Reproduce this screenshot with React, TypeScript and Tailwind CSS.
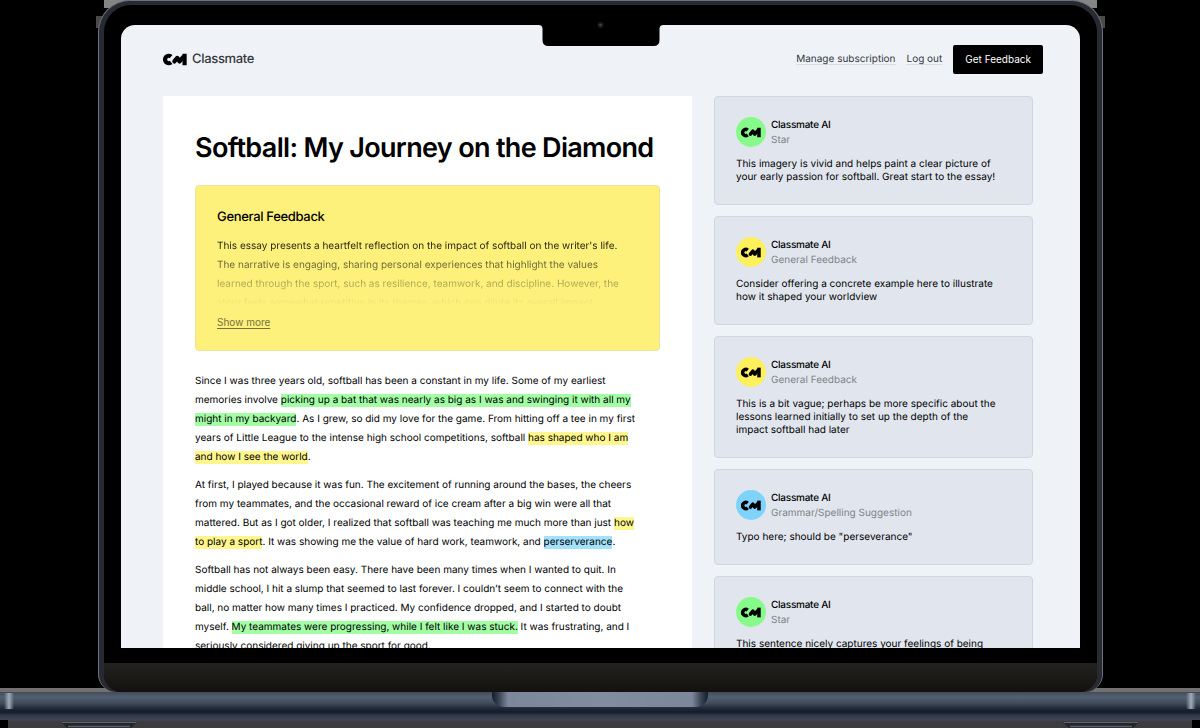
import type { ReactNode } from "react";

type Kind = "star" | "general" | "grammar";

const markColor: Record<Kind, string> = {
  star: "bg-[#a2fda5]",
  general: "bg-[#fff78e]",
  grammar: "bg-[#a3e1fc]",
};

const avatarColor: Record<Kind, string> = {
  star: "bg-[#86fb8a]",
  general: "bg-[#fdf05c]",
  grammar: "bg-[#7fd3fb]",
};

const comments: { kind: Kind; label: string; text: string }[] = [
  {
    kind: "star",
    label: "Star",
    text: "This imagery is vivid and helps paint a clear picture of your early passion for softball. Great start to the essay!",
  },
  {
    kind: "general",
    label: "General Feedback",
    text: "Consider offering a concrete example here to illustrate how it shaped your worldview",
  },
  {
    kind: "general",
    label: "General Feedback",
    text: "This is a bit vague; perhaps be more specific about the lessons learned initially to set up the depth of the impact softball had later",
  },
  {
    kind: "grammar",
    label: "Grammar/Spelling Suggestion",
    text: 'Typo here; should be "perseverance"',
  },
  {
    kind: "star",
    label: "Star",
    text: "This sentence nicely captures your feelings of being",
  },
];

function Logo({ className }: { className: string }) {
  return (
    <svg viewBox="0 0 74 40" className={className} aria-hidden="true">
      <path
        d="M25 11 A11.5 11.5 0 1 0 25 29"
        fill="none"
        stroke="#000"
        strokeWidth="13"
      />
      <path
        d="M35 26 L44 15 L51 26 L62 13"
        fill="none"
        stroke="#000"
        strokeWidth="13"
        strokeLinecap="round"
        strokeLinejoin="round"
      />
      <path d="M60 2 H73 V38 H60 Z" fill="#000" />
    </svg>
  );
}

function Mark({ kind, children }: { kind: Kind; children: ReactNode }) {
  return <mark className={`pb-px text-black ${markColor[kind]}`}>{children}</mark>;
}

function Header() {
  return (
    <header className="flex h-[29px] items-center justify-between">
      <a href="#" className="flex items-center gap-[5px]">
        <Logo className="h-[13px] w-[24px]" />
        <span className="text-[13px] font-medium tracking-tight text-[#35383c]">Classmate</span>
      </a>
      <nav className="flex items-center gap-[11px] text-[10px] text-[#35383c]">
        <a href="#" className="underline decoration-[#d9dde2] underline-offset-2">
          Manage subscription
        </a>
        <a href="#" className="underline decoration-[#d9dde2] underline-offset-2">
          Log out
        </a>
        <button type="button" className="h-[29px] rounded-[2px] bg-black px-3 text-white">
          Get Feedback
        </button>
      </nav>
    </header>
  );
}

function Essay() {
  return (
    <article className="bg-white px-8 pt-[33px] pb-10">
      <h1 className="text-[27px] leading-[38px] font-semibold tracking-tight whitespace-nowrap">
        Softball: My Journey on the Diamond
      </h1>
      <section className="mt-[18px] rounded-[4px] border border-[#ece39a] bg-[#fdf17c] px-[21px] pt-[21px] pb-[18px]">
        <h2 className="text-[13px] leading-5 font-medium tracking-tight">General Feedback</h2>
        <div className="mt-[10px] h-[68px] overflow-hidden pr-3 [mask-image:linear-gradient(to_bottom,black,transparent)]">
          <p className="text-[10px] leading-[19px]">
            This essay presents a heartfelt reflection on the impact of softball on the writer's life. The
            narrative is engaging, sharing personal experiences that highlight the values learned through the
            sport, such as resilience, teamwork, and discipline. However, the story feels somewhat repetitive in
            its themes, which can dilute its overall impact.
          </p>
        </div>
        <button
          type="button"
          className="mt-2 block text-[10px] leading-[19px] text-[#77713f] underline underline-offset-2"
        >
          Show more
        </button>
      </section>
      <div className="mt-[21px] space-y-[9px] pr-4 text-[10px] leading-[19px] text-black">
        <p>
          Since I was three years old, softball has been a constant in my life. Some of my earliest memories
          involve{" "}
          <Mark kind="star">
            picking up a bat that was nearly as big as I was and swinging it with all my might in my backyard
          </Mark>
          . As I grew, so did my love for the game. From hitting off a tee in my first years of Little League to
          the intense high school competitions, softball{" "}
          <Mark kind="general">has shaped who I am and how I see the world</Mark>.
        </p>
        <p>
          At first, I played because it was fun. The excitement of running around the bases, the cheers from my
          teammates, and the occasional reward of ice cream after a big win were all that mattered. But as I got
          older, I realized that softball was teaching me much more than just{" "}
          <Mark kind="general">how to play a sport</Mark>. It was showing me the value of hard work, teamwork,
          and <Mark kind="grammar">perserverance</Mark>.
        </p>
        <p>
          Softball has not always been easy. There have been many times when I wanted to quit. In middle school,
          I hit a slump that seemed to last forever. I couldn’t seem to connect with the ball, no matter how
          many times I practiced. My confidence dropped, and I started to doubt myself.{" "}
          <Mark kind="star">My teammates were progressing, while I felt like I was stuck.</Mark> It was
          frustrating, and I seriously considered giving up the sport for good.
        </p>
      </div>
    </article>
  );
}

function Comments() {
  return (
    <aside className="space-y-[11px]">
      {comments.map((comment, index) => (
        <section
          key={index}
          className="rounded-[4px] border border-[#d0d6e0] bg-[#e1e6ee] px-[21px] py-5 text-[10px]"
        >
          <div className="flex items-start gap-[5px]">
            <div
              className={`flex size-[30px] items-center justify-center rounded-full ${avatarColor[comment.kind]}`}
            >
              <Logo className="h-[11px] w-5" />
            </div>
            <div className="pt-px leading-[15px]">
              <h3 className="font-medium tracking-tight">Classmate AI</h3>
              <p className="text-[#7e8389]">{comment.label}</p>
            </div>
          </div>
          <p className="mt-[10px] pr-[13px] leading-[13px] text-black">{comment.text}</p>
        </section>
      ))}
    </aside>
  );
}

function Foot() {
  return (
    <svg viewBox="0 0 76 7" className="h-[7px] w-[76px]" aria-hidden="true">
      <path d="M0 1 H76 L70 7 H6 Z" fill="#24262b" />
      <path d="M1 1.5 H75" stroke="#5f636b" strokeWidth="1" />
      <path d="M7 5.5 H69" stroke="#5b5f67" strokeWidth="1.5" />
    </svg>
  );
}

function Base() {
  return (
    <div className="relative h-9 shrink-0 bg-[linear-gradient(to_bottom,#414b5a_0,#526071_5px,#414c5c_11px,#1d2636_17px,#161d2b_20px,#343b4a_24px,#414555_28px,#3c3c3e_30px,#3c3c3e_36px)]">
      <div className="absolute top-px left-1 h-4 w-[10px] bg-[linear-gradient(to_right,transparent,#a3acb9,transparent)]" />
      <div className="absolute top-px right-1 h-4 w-[10px] bg-[linear-gradient(to_right,transparent,#a3acb9,transparent)]" />
      <div className="absolute bottom-0 left-0 h-2 w-2 bg-black" />
      <div className="absolute right-0 bottom-0 h-2 w-2 bg-black" />
      <div className="mx-auto h-[15px] w-[216px] rounded-b-[12px] bg-[linear-gradient(to_right,#141c29_0,#3a4453_7px,#7c879a_16px,#818c9f_50%,#7c879a_200px,#3a4453_209px,#141c29_216px)]" />
      <div className="flex justify-between px-[61px] pt-[14px]">
        <Foot />
        <Foot />
      </div>
    </div>
  );
}

export default function App() {
  return (
    <div className="flex h-screen flex-col overflow-hidden bg-black bg-[linear-gradient(#73716f,#73716f)] bg-[length:100%_4px] bg-[position:0_calc(100%-36px)] bg-no-repeat font-['Inter',sans-serif] text-black [text-rendering:geometricPrecision]">
      <div className="relative mr-[97px] ml-[98px] flex min-h-0 flex-1 flex-col">
        <div className="absolute top-0 left-[6px] h-2 w-6 bg-[#858585]" />
        <div className="absolute top-0 right-[6px] h-2 w-6 bg-[#858585]" />
        <div className="absolute top-4 -left-[2px] h-3 w-4 bg-[#4a4a4a]" />
        <div className="absolute top-4 -right-[2px] h-3 w-4 bg-[#4a4a4a]" />
        <div className="relative flex min-h-0 flex-1 flex-col rounded-t-[32px] rounded-b-[18px] border border-b-0 border-[#6c7080] bg-[#272a30] px-[5px] pt-1">
          <div className="relative flex min-h-0 flex-1 flex-col overflow-hidden rounded-t-[27px] rounded-b-[18px] bg-black">
            <div className="mx-[17px] mt-5 flex min-h-0 flex-1 flex-col overflow-hidden rounded-t-[14px] bg-[#eff3f8] pt-5 pr-[37px] pl-[42px]">
              <Header />
              <main className="mt-[22px] grid grid-cols-[minmax(0,529fr)_minmax(0,319fr)] items-start gap-[22px] pr-[10px]">
                <Essay />
                <Comments />
              </main>
            </div>
            <div className="h-[15px] shrink-0" />
            <div className="h-[29px] shrink-0 bg-linear-to-b from-[#23221f] to-[#141210]" />
            <svg
              viewBox="0 0 125 46"
              className="absolute top-0 left-1/2 h-[41px] w-[125px] -translate-x-1/2"
              preserveAspectRatio="xMidYMax slice"
              aria-hidden="true"
            >
              <path
                d="M0 0 H125 V25 Q121 25 121 29 V40 Q121 46 115 46 H10 Q4 46 4 40 V29 Q4 25 0 25 Z"
                fill="#000"
              />
              <circle cx="62" cy="25" r="3" fill="#17191b" />
              <circle cx="62" cy="25" r="1.3" fill="#3c4145" />
            </svg>
          </div>
        </div>
      </div>
      <Base />
    </div>
  );
}
